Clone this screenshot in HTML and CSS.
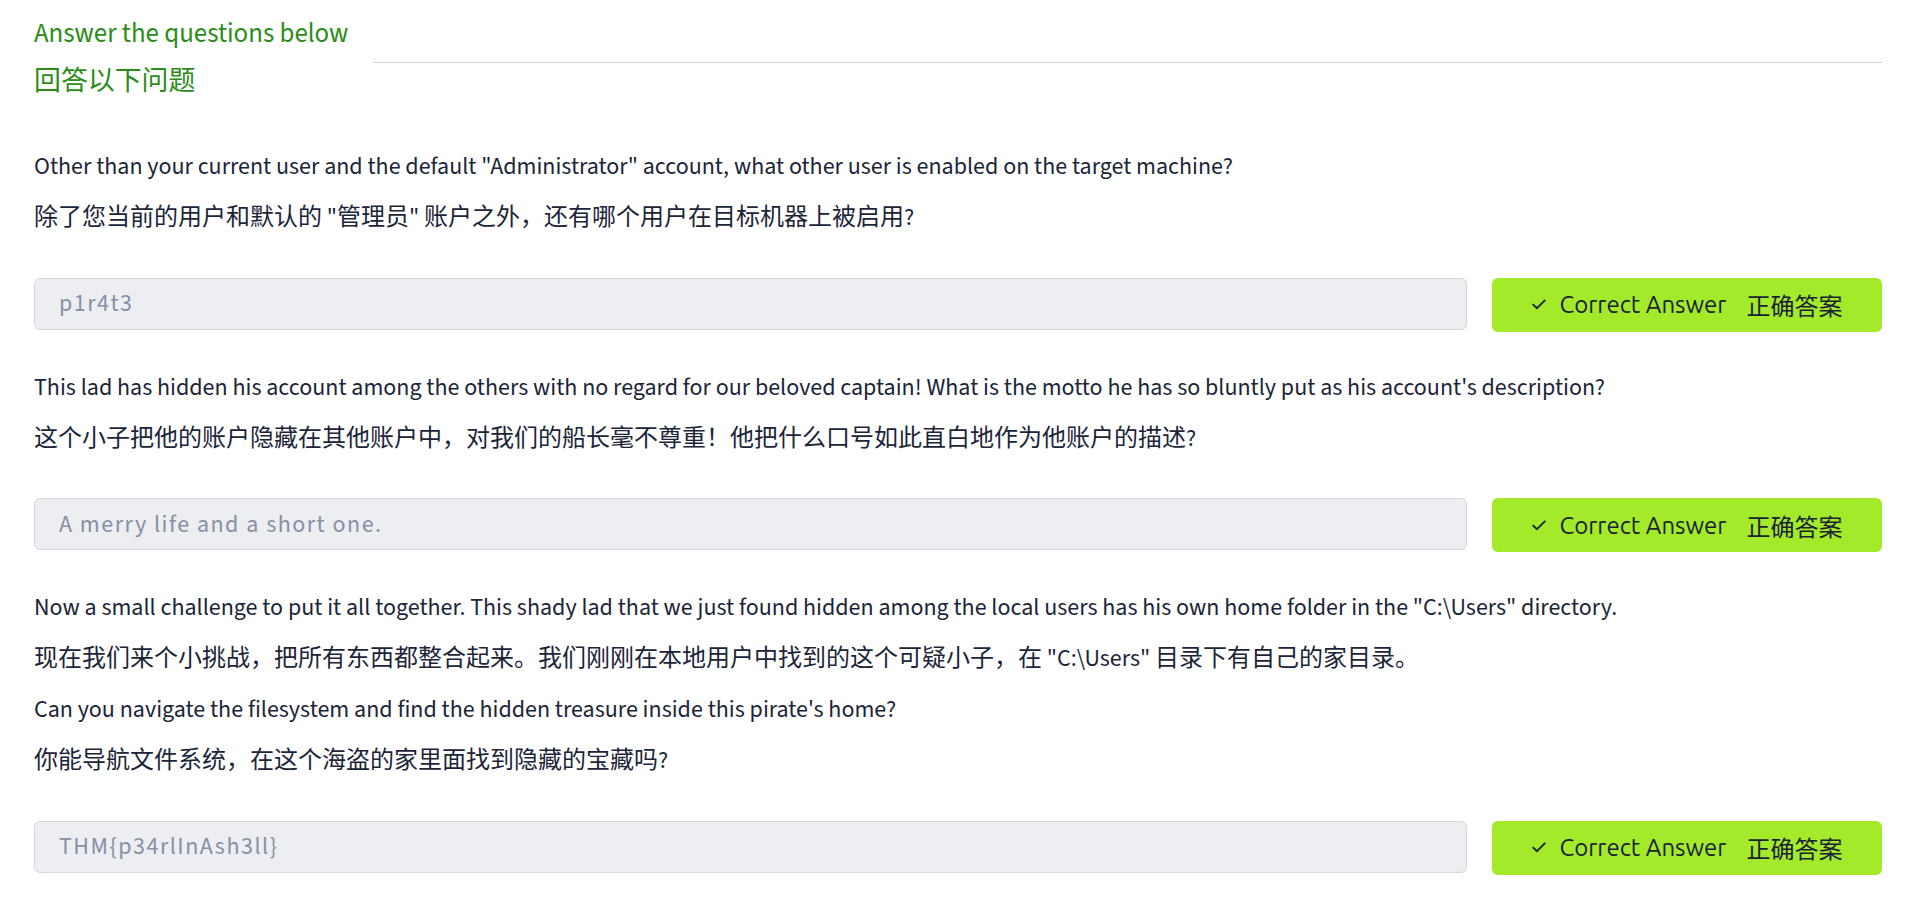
FILE: index.html
```html
<!DOCTYPE html>
<html lang="en">
<head>
<meta charset="utf-8">
<title>Answer the questions below</title>
<link rel="stylesheet" href="styles.css">
</head>
<body>
<main class="task">
  <div class="task-head">
    <div class="head-text">
      <div class="head-en">Answer the questions below</div>
      <div class="head-zh">回答以下问题</div>
    </div>
    <div class="head-rule"></div>
  </div>

  <div class="questions">
    <section class="question">
      <div class="q-text">
        <p>Other than your current user and the default "Administrator" account, what other user is enabled on the target machine?</p>
        <p>除了您当前的用户和默认的 "管理员" 账户之外，还有哪个用户在目标机器上被启用?</p>
      </div>
      <div class="answer-row">
        <input class="answer-input" type="text" readonly value="p1r4t3">
        <button class="answer-btn" type="button">
          <svg class="check" width="14" height="11" viewBox="0 0 14 11"><path d="M1.2 5.6 L5 9.2 L12.8 1.4" fill="none" stroke="currentColor" stroke-width="1.9" stroke-linecap="round" stroke-linejoin="round"/></svg>
          <span class="btn-en">Correct Answer</span>
          <span class="btn-zh">正确答案</span>
        </button>
      </div>
    </section>

    <section class="question">
      <div class="q-text">
        <p>This lad has hidden his account among the others with no regard for our beloved captain! What is the motto he has so bluntly put as his account's description?</p>
        <p>这个小子把他的账户隐藏在其他账户中，对我们的船长毫不尊重！他把什么口号如此直白地作为他账户的描述?</p>
      </div>
      <div class="answer-row">
        <input class="answer-input" type="text" readonly value="A merry life and a short one.">
        <button class="answer-btn" type="button">
          <svg class="check" width="14" height="11" viewBox="0 0 14 11"><path d="M1.2 5.6 L5 9.2 L12.8 1.4" fill="none" stroke="currentColor" stroke-width="1.9" stroke-linecap="round" stroke-linejoin="round"/></svg>
          <span class="btn-en">Correct Answer</span>
          <span class="btn-zh">正确答案</span>
        </button>
      </div>
    </section>

    <section class="question">
      <div class="q-text">
        <p>Now a small challenge to put it all together. This shady lad that we just found hidden among the local users has his own home folder in the "C:\Users" directory.</p>
        <p>现在我们来个小挑战，把所有东西都整合起来。我们刚刚在本地用户中找到的这个可疑小子，在 "C:\Users" 目录下有自己的家目录。</p>
        <p>Can you navigate the filesystem and find the hidden treasure inside this pirate's home?</p>
        <p>你能导航文件系统，在这个海盗的家里面找到隐藏的宝藏吗?</p>
      </div>
      <div class="answer-row">
        <input class="answer-input" type="text" readonly value="THM{p34rlInAsh3ll}">
        <button class="answer-btn" type="button">
          <svg class="check" width="14" height="11" viewBox="0 0 14 11"><path d="M1.2 5.6 L5 9.2 L12.8 1.4" fill="none" stroke="currentColor" stroke-width="1.9" stroke-linecap="round" stroke-linejoin="round"/></svg>
          <span class="btn-en">Correct Answer</span>
          <span class="btn-zh">正确答案</span>
        </button>
      </div>
    </section>
  </div>
</main>
</body>
</html>
```
FILE: styles.css
```css
html, body {
  margin: 0;
  padding: 0;
  background: #ffffff;
}

body {
  font-family: "Source Sans 3", "Lato", "Noto Sans CJK SC", sans-serif;
  font-size: 24px;
  color: #1c2538;
}

.task {
  padding: 15.5px 38px 0 34px;
}

.task-head {
  display: flex;
  align-items: center;
}

.head-text {
  display: flex;
  flex-direction: column;
  gap: 12px;
  padding-bottom: 9px;
  color: #2b8d17;
  font-size: 26.9px;
  line-height: 36px;
}

.head-en,
.head-zh {
  white-space: nowrap;
}

.head-rule {
  flex: 1;
  height: 1px;
  margin-left: 25px;
  background: #cdd5df;
}

.questions {
  display: flex;
  flex-direction: column;
  gap: 38px;
  margin-top: 40.5px;
}

.question {
  display: flex;
  flex-direction: column;
}

.q-text {
  display: flex;
  flex-direction: column;
  gap: 15px;
}

.q-text p {
  margin: 0;
  line-height: 36px;
  white-space: nowrap;
}

.answer-row {
  display: flex;
  align-items: flex-start;
  gap: 25px;
  margin-top: 41.5px;
}

.answer-input {
  flex: 1;
  min-width: 0;
  box-sizing: border-box;
  height: 52px;
  margin: 0;
  padding: 0 24px;
  border: 1px solid #d3d8df;
  border-radius: 6px;
  background: #eceef2;
  color: #8790a6;
  font-family: "Source Sans 3", "Lato", sans-serif;
  font-size: 24px;
  letter-spacing: 1.5px;
  outline: none;
}

.answer-btn {
  display: flex;
  align-items: center;
  justify-content: center;
  box-sizing: border-box;
  width: 390px;
  height: 54px;
  margin: 0;
  padding: 0;
  border: none;
  border-radius: 6px;
  background: #a3ea2a;
  color: #1a2233;
  font-family: "Ubuntu", "Open Sans", "Noto Sans CJK SC", sans-serif;
  font-size: 24px;
  cursor: pointer;
}

.check {
  display: block;
  margin-right: 14px;
}

.btn-en {
  white-space: nowrap;
}

.btn-zh {
  margin-left: 20px;
  font-family: "Noto Sans CJK SC", sans-serif;
  white-space: nowrap;
}
```
